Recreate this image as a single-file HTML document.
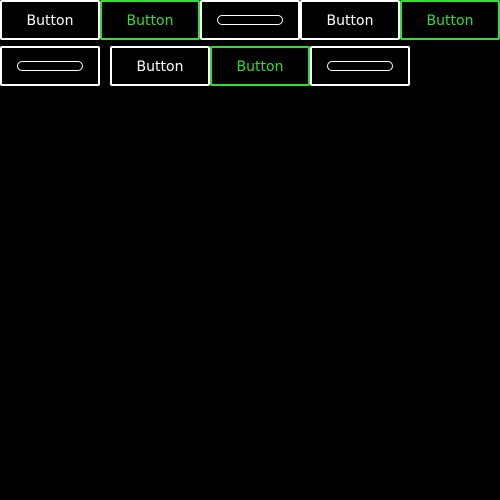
<!DOCTYPE html>
<html><head><style>
html,body{margin:0;padding:0;background:#000;width:500px;height:500px;overflow:hidden}
.b{position:absolute;box-sizing:border-box;width:100px;height:40px;border:2px solid #fff;border-radius:2px;color:#fff;font:14px "DejaVu Sans","Liberation Sans",sans-serif;display:flex;align-items:center;justify-content:center;padding-top:2px}
.g{border-color:#33dd33;color:#33dd33}
.p{width:66px;height:10px;box-sizing:border-box;border:1px solid #fff;border-radius:5px;margin-top:-2px}
</style></head><body>
<div class="b" style="left:0;top:0">Button</div>
<div class="b g" style="left:100px;top:0">Button</div>
<div class="b" style="left:200px;top:0"><div class="p"></div></div>
<div class="b" style="left:300px;top:0">Button</div>
<div class="b g" style="left:400px;top:0">Button</div>
<div class="b" style="left:0;top:46px"><div class="p"></div></div>
<div class="b" style="left:110px;top:46px">Button</div>
<div class="b g" style="left:210px;top:46px">Button</div>
<div class="b" style="left:310px;top:46px"><div class="p"></div></div>
</body></html>
